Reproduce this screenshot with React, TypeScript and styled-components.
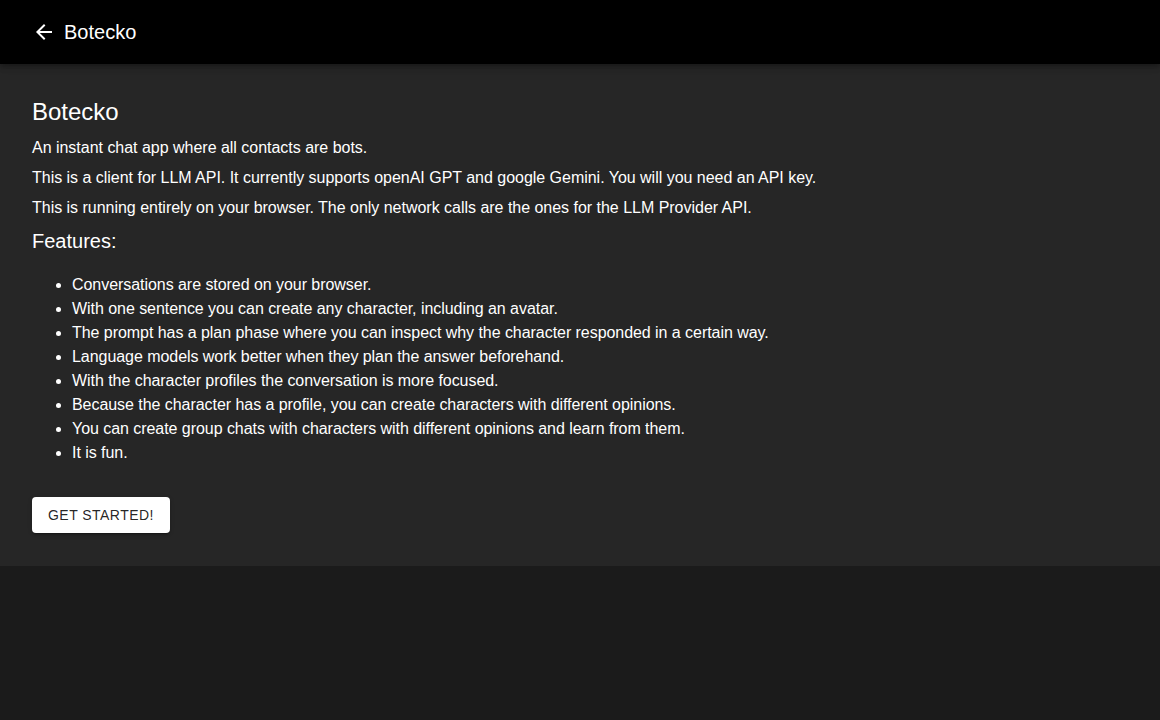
import React from "react";
import styled, { createGlobalStyle } from "styled-components";

const GlobalStyle = createGlobalStyle`
	html, body {
		margin: 0;
		padding: 0;
		background-color: #1b1b1b;
		font-family: "Liberation Sans", Arial, sans-serif;
		color: #ffffff;
	}
	* {
		box-sizing: border-box;
	}
`;

const Page = styled.div`
	min-height: 720px;
	background-color: #1b1b1b;
`;

const TopBar = styled.header`
	height: 64px;
	background-color: #000000;
	display: flex;
	align-items: center;
	padding: 0 32px;
	gap: 8px;
	box-shadow: 0 2px 4px -1px rgba(0, 0, 0, 0.2), 0 4px 5px 0 rgba(0, 0, 0, 0.14),
		0 1px 10px 0 rgba(0, 0, 0, 0.12);
	position: relative;
	z-index: 1;
`;

const BackButton = styled.button`
	background: none;
	border: none;
	padding: 0;
	width: 24px;
	height: 24px;
	display: flex;
	align-items: center;
	justify-content: center;
	color: #ffffff;
	cursor: pointer;
`;

const BarTitle = styled.h6`
	margin: 0;
	font-size: 20px;
	font-weight: 400;
	line-height: 1.6;
	color: #ffffff;
`;

const Paper = styled.main`
	background-color: #262626;
	padding: 32px 32px 33px;
`;

const Title = styled.h5`
	margin: 0 0 8px;
	font-size: 24px;
	font-weight: 400;
	line-height: 32px;
	color: #ffffff;
`;

const Paragraph = styled.p<{ $last?: boolean }>`
	margin: 0 0 ${(p) => (p.$last ? "5px" : "6px")};
	font-size: 16px;
	line-height: 24px;
	letter-spacing: -0.02px;
	color: #ffffff;
`;

const SubTitle = styled.h6`
	margin: 0;
	font-size: 20px;
	font-weight: 400;
	line-height: 32px;
	color: #ffffff;
`;

const FeatureList = styled.ul`
	margin: 16px 0;
	padding-left: 40px;
`;

const FeatureItem = styled.li`
	font-size: 16px;
	line-height: 24px;
	letter-spacing: -0.05px;
	color: #ffffff;
`;

const StartButton = styled.button`
	margin-top: 16px;
	height: 36px;
	padding: 6px 16px;
	background-color: #ffffff;
	color: rgba(0, 0, 0, 0.87);
	border: none;
	border-radius: 4px;
	font-family: "Liberation Sans", Arial, sans-serif;
	font-size: 14px;
	font-weight: 400;
	letter-spacing: 0.46px;
	text-transform: uppercase;
	cursor: pointer;
	box-shadow: 0 3px 1px -2px rgba(0, 0, 0, 0.2), 0 2px 2px 0 rgba(0, 0, 0, 0.14),
		0 1px 5px 0 rgba(0, 0, 0, 0.12);
`;

const features = [
	"Conversations are stored on your browser.",
	"With one sentence you can create any character, including an avatar.",
	"The prompt has a plan phase where you can inspect why the character responded in a certain way.",
	"Language models work better when they plan the answer beforehand.",
	"With the character profiles the conversation is more focused.",
	"Because the character has a profile, you can create characters with different opinions.",
	"You can create group chats with characters with different opinions and learn from them.",
	"It is fun.",
];

const ArrowBack = () => (
	<svg width="24" height="24" viewBox="0 0 24 24" fill="currentColor">
		<path d="M20 11H7.83l5.59-5.59L12 4l-8 8 8 8 1.41-1.41L7.83 13H20v-2z" />
	</svg>
);

const App: React.FC = () => {
	return (
		<Page>
			<GlobalStyle />
			<TopBar>
				<BackButton aria-label="back">
					<ArrowBack />
				</BackButton>
				<BarTitle>Botecko</BarTitle>
			</TopBar>
			<Paper>
				<Title>Botecko</Title>
				<Paragraph>An instant chat app where all contacts are bots.</Paragraph>
				<Paragraph>
					This is a client for LLM API. It currently supports openAI GPT and google Gemini. You
					will you need an API key.
				</Paragraph>
				<Paragraph $last>
					This is running entirely on your browser. The only network calls are the ones for the
					LLM Provider API.
				</Paragraph>
				<SubTitle>Features:</SubTitle>
				<FeatureList>
					{features.map((f) => (
						<FeatureItem key={f}>{f}</FeatureItem>
					))}
				</FeatureList>
				<StartButton>Get started!</StartButton>
			</Paper>
		</Page>
	);
};

export default App;
